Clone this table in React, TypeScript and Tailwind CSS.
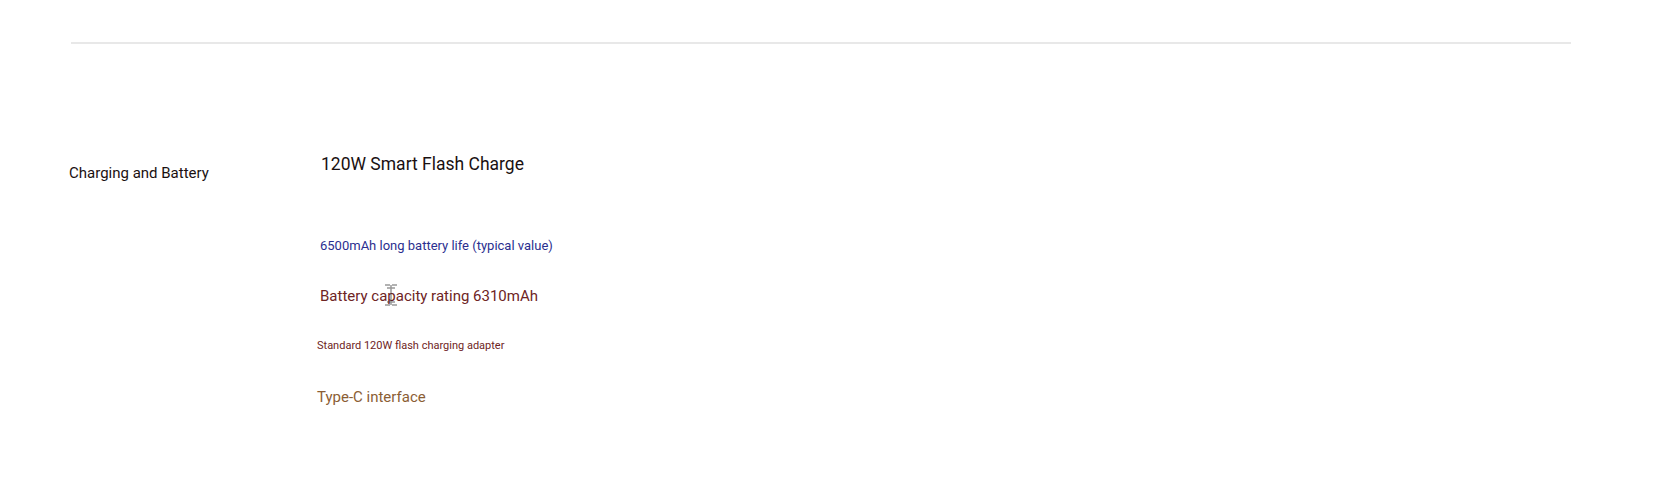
const SPECS = [
  { text: '6500mAh long battery life (typical value)', cls: 'ml-[2px] text-[13px] text-[#2b2f8f]' },
  { text: 'Battery capacity rating 6310mAh', cls: 'ml-[2px] mt-[30px] text-[15px] text-[#6e2424]' },
  { text: 'Standard 120W flash charging adapter', cls: '-ml-[1px] mt-[30px] text-[11px] text-[#6e2424]' },
  { text: 'Type-C interface', cls: '-ml-[1px] mt-[31px] text-[15px] text-[#8b5e34]' },
];

export default function App() {
  return (
    <div className="w-[1661px] h-[477px] bg-white font-['Roboto',sans-serif] overflow-hidden">
      <div className="ml-[71px] w-[1500px] pt-[42px]">
        <div className="h-[2px] bg-[#e8e8e8]" />

        <div className="flex mt-[100px]">
          {/* Label column */}
          <div className="w-[249px] -ml-[2px] pt-[19px] text-[15px] text-[#1a1111] leading-5">
            Charging and Battery
          </div>

          {/* Specs column */}
          <div className="flex flex-col">
            <div className="ml-[3px] mt-[8px] text-[17.5px] leading-6 text-[#1a1111]">120W Smart Flash Charge</div>
            <div className="mt-[60px] flex flex-col leading-5">
              {SPECS.map((s) => (
                <div key={s.text} className={`relative ${s.cls}`}>
                  {s.text}
                  {s.text.startsWith('Battery capacity') && (
                    <svg
                      className="absolute left-[62px] top-[-2px]"
                      width="18"
                      height="22"
                      viewBox="0 0 18 22"
                    >
                      <path d="M3 1h5M10 1h5M9 1v20M3 21h5M10 21h5M5 4h8M5 18h8" stroke="#333" strokeWidth="1.5" fill="none" opacity="0.5" />
                    </svg>
                  )}
                </div>
              ))}
            </div>
          </div>
        </div>
      </div>
    </div>
  );
}
